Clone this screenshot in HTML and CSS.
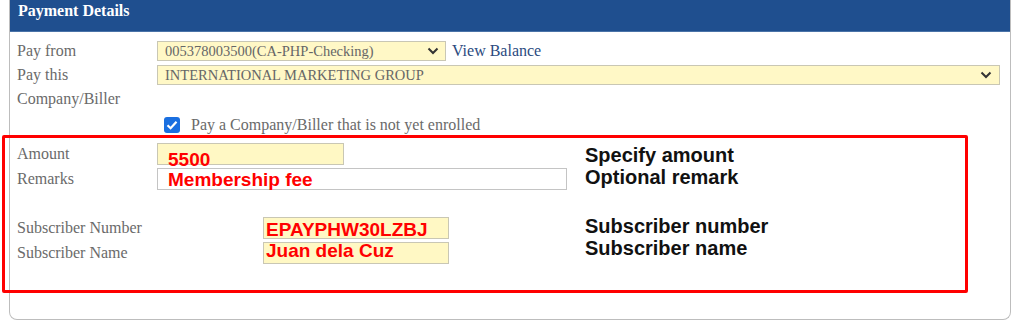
FILE: index.html
```html
<!DOCTYPE html>
<html lang="en">
<head>
  <meta charset="UTF-8" />
  <title>Payment Details</title>
  <link rel="stylesheet" href="styles.css">
</head>
<body>

  <div class="card">
    <div class="card-head">Payment Details</div>
    <div class="card-body">

      <div class="row">
        <div class="label">Pay from</div>
        <div class="cell">
          <div class="select select-account">
            <span>005378003500(CA-PHP-Checking)</span>
            <svg class="chevron" width="12" height="8" viewBox="0 0 12 8"><path d="M1.5 1.5 L6 6 L10.5 1.5" fill="none" stroke="#333" stroke-width="2"/></svg>
          </div>
          <a class="link" href="#">View Balance</a>
        </div>
      </div>

      <div class="row row-top">
        <div class="label">Pay this<br>Company/Biller</div>
        <div class="cell">
          <div class="select select-biller">
            <span>INTERNATIONAL MARKETING GROUP</span>
            <svg class="chevron" width="12" height="8" viewBox="0 0 12 8"><path d="M1.5 1.5 L6 6 L10.5 1.5" fill="none" stroke="#333" stroke-width="2"/></svg>
          </div>
        </div>
      </div>

      <div class="row row-check">
        <div class="label"></div>
        <div class="cell">
          <span class="check">
            <svg width="16" height="16" viewBox="0 0 16 16"><path d="M3.5 8.2 L6.6 11.2 L12.5 4.8" fill="none" stroke="#fff" stroke-width="2.2"/></svg>
          </span>
          <span class="check-text">Pay a Company/Biller that is not yet enrolled</span>
        </div>
      </div>

      <div class="detail">
        <div class="detail-rows">
          <div class="row row-field">
            <div class="label">Amount</div>
            <div class="cell">
              <div class="field yellow w-amount"><span class="val low">5500</span></div>
            </div>
          </div>
          <div class="row row-field">
            <div class="label">Remarks</div>
            <div class="cell">
              <div class="field w-remarks"><span class="val">Membership fee</span></div>
            </div>
          </div>
          <div class="spacer"></div>
          <div class="row row-field">
            <div class="label">Subscriber Number</div>
            <div class="cell">
              <div class="field yellow w-sub"><span class="val tight">EPAYPHW30LZBJ</span></div>
            </div>
          </div>
          <div class="row row-field">
            <div class="label">Subscriber Name</div>
            <div class="cell">
              <div class="field yellow w-sub"><span class="val tight high">Juan dela Cuz</span></div>
            </div>
          </div>
        </div>

        <div class="notes">
          <p>Specify amount<br>Optional remark</p>
          <p>Subscriber number<br>Subscriber name</p>
        </div>

        <div class="callout"></div>
      </div>

    </div>
  </div>

</body>
</html>
```

FILE: styles.css
```css
body {
  margin: 0;
  background: #fff;
  font-family: "Liberation Serif", "Times New Roman", serif;
  font-size: 16px;
  color: #6a6a6a;
}

.card {
  margin-left: 9px;
  width: 1002px;
  height: 320px;
  box-sizing: border-box;
  border: 1px solid #bdbdbd;
  border-top: none;
  border-radius: 0 0 8px 8px;
}

.card-head {
  height: 32px;
  box-sizing: border-box;
  padding: 1px 8px 0;
  line-height: 20px;
  background: #1f4f8f;
  border-bottom: 1px solid #4a73a8;
  color: #fff;
  font-weight: bold;
}

.card-body {
  padding: 7px 0 0 7px;
}

.row {
  display: grid;
  grid-template-columns: 140px 1fr;
  min-height: 24px;
  line-height: 24px;
}

.cell {
  display: flex;
  align-items: center;
}

.row-top .cell {
  align-items: flex-start;
  padding-top: 2px;
}

.row-check {
  padding-top: 2px;
}

.select {
  display: flex;
  align-items: center;
  justify-content: space-between;
  height: 20px;
  box-sizing: border-box;
  padding: 0 6px 0 7px;
  background: #fff8c6;
  border: 1px solid #c9c7b4;
  font-size: 14.5px;
  line-height: 18px;
  color: #666;
}

.select-account {
  width: 289px;
}

.select-biller {
  width: 843px;
  padding-right: 7px;
}

.link {
  margin-left: 6px;
  color: #2b4a80;
  text-decoration: none;
}

.check {
  display: inline-flex;
  width: 16px;
  height: 16px;
  margin-left: 7px;
  border-radius: 3px;
  background: #1a6fe0;
}

.check-text {
  margin-left: 11px;
}

.detail {
  position: relative;
  display: flex;
  margin-top: 4px;
}

.detail-rows {
  width: 568px;
}

.row-field {
  min-height: 25px;
  line-height: 25px;
}

.spacer {
  height: 24px;
}

.field {
  height: 22px;
  box-sizing: border-box;
  border: 1px solid #c4c4c4;
  background: #fff;
  overflow: visible;
}

.field.yellow {
  background: #fff8c4;
  border-color: #c9c7b4;
}

.w-amount {
  width: 187px;
}

.w-remarks {
  width: 410px;
}

.w-sub {
  width: 186px;
  margin-left: 106px;
}

.val {
  display: block;
  padding: 1px 0 0 10px;
  font-family: "Liberation Sans", Arial, sans-serif;
  font-size: 19px;
  font-weight: bold;
  line-height: 19px;
  color: #f00;
  white-space: nowrap;
}

.val.low {
  padding-top: 6px;
}

.val.tight {
  padding-left: 2px;
  padding-top: 2px;
}

.val.high {
  padding-top: 0;
  margin-top: -2px;
}

.notes {
  padding-top: 3px;
  font-family: "Liberation Sans", Arial, sans-serif;
  font-size: 20px;
  font-weight: bold;
  line-height: 22px;
  color: #111;
}

.notes p {
  margin: 0 0 27px;
}

.callout {
  position: absolute;
  left: -15px;
  top: -6px;
  width: 966px;
  height: 158px;
  box-sizing: border-box;
  border: 3px solid #f00;
  border-radius: 2px;
}
```
